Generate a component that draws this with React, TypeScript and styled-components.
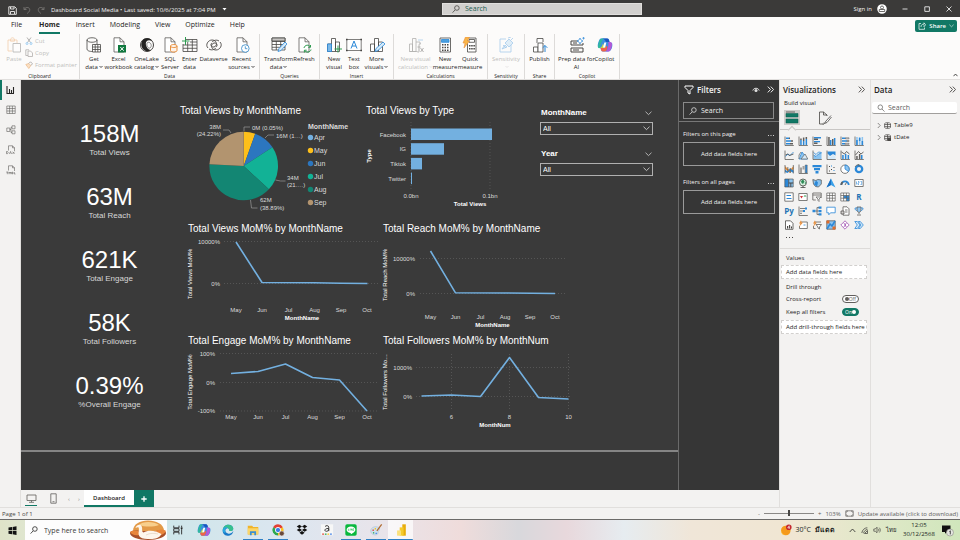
import React, { useState } from "react";
import styled, { createGlobalStyle } from "styled-components";

const teal = "#117865";
const grey = "#605e5c";
const blue = "#2b88d8";
const sky = "#8cc4f0";

const Global = createGlobalStyle`
  * { box-sizing: border-box; }
  body { margin: 0; background: #f3f2f1; color: #252423; font: 6px/8px "Open Sans", "Noto Sans", sans-serif; }
  button, input, select { font: inherit; color: inherit; margin: 0; padding: 0; border: 0; background: none; }
  h1, h2, h3, p, ul, dl, dd { margin: 0; padding: 0; font: inherit; }
  ul { list-style: none; }
  svg { display: block; flex: none; }
`;

/* ---------- frame ---------- */
const Shell = styled.div`
  display: flex;
  flex-direction: column;
  min-height: 100vh;
`;
const TitleBar = styled.header`
  display: grid;
  grid-template-columns: 442fr 200px 318fr;
  align-items: center;
  height: 17px;
  background: #3b3a39;
  color: #f3f2f1;
`;
const TitleSide = styled.div<{ $end?: boolean }>`
  display: flex;
  align-items: center;
  justify-content: ${(p) => (p.$end ? "flex-end" : "flex-start")};
  gap: ${(p) => (p.$end ? 14 : 6)}px;
  padding: ${(p) => (p.$end ? "0 7px 0 0" : "3px 0 0 8px")};
  white-space: nowrap;
`;
const Account = styled.button`
  display: flex;
  align-items: center;
  gap: 5px;
`;
const TitleSearch = styled.label`
  display: flex;
  align-items: center;
  gap: 5px;
  height: 12px;
  padding-left: 9px;
  background: #d2d0ce;
  color: #245f52;
  border: 1px solid #e1dfdd;
`;
const Field = styled.input`
  flex: 1;
  min-width: 0;
  height: 10px;
  font-size: 7px;
  outline: 0;
  &::placeholder { color: inherit; opacity: 1; }
`;
const MenuBar = styled.nav`
  display: flex;
  align-items: center;
  height: 17px;
  padding: 0 3px 0 11px;
  gap: 15px;
  background: #fcfbfa;
  font-size: 7px;
`;
const MenuTab = styled.button<{ $active?: boolean }>`
  height: 16px;
  margin: ${(p) => (p.$active ? "0 1px 0 2px" : "0")};
  border-bottom: 2px solid ${(p) => (p.$active ? teal : "transparent")};
  font-weight: ${(p) => (p.$active ? 700 : 400)};
`;
const ShareButton = styled.button`
  display: flex;
  align-items: center;
  gap: 3px;
  margin-left: auto;
  height: 12px;
  padding: 0 3px;
  border-radius: 2px;
  background: ${teal};
  color: #fff;
  font-size: 6px;
  font-weight: 600;
`;

/* ---------- ribbon ---------- */
const RibbonBar = styled.div`
  display: flex;
  height: 46px;
  background: #fcfbfa;
  border-bottom: 1px solid #e1dfdd;
`;
const Group = styled.section`
  display: flex;
  flex-direction: column;
  justify-content: space-between;
  padding: 3px 4px 0;
  border-right: 1px solid #dddbd9;
`;
const GroupItems = styled.div`
  display: flex;
`;
const GroupName = styled.h2`
  text-align: center;
  font-size: 5px;
  line-height: 6px;
  white-space: nowrap;
`;
const Tool = styled.button<{ $w: number; $off?: boolean }>`
  display: flex;
  flex-direction: column;
  align-items: center;
  gap: 2px;
  width: ${(p) => p.$w}px;
  white-space: nowrap;
  color: ${(p) => (p.$off ? "#c0bebc" : "#252423")};
  svg { opacity: ${(p) => (p.$off ? 0.4 : 1)}; }
`;
const ToolText = styled.span`
  display: block;
  text-align: center;
`;
const ClipList = styled.div`
  display: flex;
  flex-direction: column;
  gap: 4px;
  width: 51px;
  padding-left: 1px;
`;
const ClipItem = styled.button`
  display: flex;
  align-items: center;
  gap: 2px;
  height: 8px;
  color: #c0bebc;
  white-space: nowrap;
`;
const Collapse = styled.button`
  margin-left: auto;
  align-self: flex-end;
  padding: 2px;
`;

/* ---------- body ---------- */
const Body = styled.main`
  display: flex;
  flex: 1;
`;
const Rail = styled.nav`
  width: 21px;
  border-right: 1px solid #e1dfdd;
`;
const RailButton = styled.button<{ $active?: boolean }>`
  display: grid;
  place-items: center;
  width: 20px;
  height: 20px;
  border-left: 2px solid ${(p) => (p.$active ? teal : "transparent")};
`;
const Center = styled.div`
  display: flex;
  flex-direction: column;
  flex: 1;
  min-width: 0;
`;
const Work = styled.div`
  display: flex;
  flex: 1;
`;
const Canvas = styled.div`
  flex: 1;
  background: #383838;
  color: #fff;
  font-family: "Liberation Sans", Arial, sans-serif;
`;
const Page = styled.div`
  display: grid;
  grid-template-columns: 159fr 498fr;
  height: 372px;
  background: #3a3a3a;
  border-bottom: 2px solid #858585;
`;
const Kpis = styled.dl`
  display: flex;
  flex-direction: column;
  gap: 26px;
  padding: 42px 0 0 18px;
`;
const Kpi = styled.div`
  display: flex;
  flex-direction: column-reverse;
  gap: 1px;
  text-align: center;
`;
const KpiName = styled.dt`
  font-size: 8px;
  line-height: 12px;
  color: #d8d8d8;
`;
const KpiValue = styled.dd`
  font-size: 24px;
  line-height: 24px;
`;
const TopRow = styled.div`
  display: grid;
  grid-template-columns: 182fr 178fr 113fr 25fr;
  padding-top: 25px;
`;
const TrendGrid = styled.div`
  display: grid;
  grid-template-columns: 198fr 198fr 100fr;
  row-gap: 3px;
  padding-left: 2px;
`;
const Visual = styled.section<{ $col?: number; $indent: number }>`
  grid-column: ${(p) => p.$col ?? "auto"};
  h2 {
    padding-left: ${(p) => p.$indent}px;
    font-size: 10px;
    line-height: 12px;
    white-space: nowrap;
  }
`;
const Chart = styled.svg`
  width: 100%;
  margin-top: 1px;
  font-size: 6px;
  fill: #dadada;
  overflow: visible;
`;
const Slicers = styled.div`
  display: flex;
  flex-direction: column;
  gap: 13px;
  padding-top: 2px;
`;
const Slicer = styled.label`
  display: grid;
  gap: 3px;
  font-size: 8px;
  line-height: 12px;
  font-weight: 700;
`;
const SlicerHead = styled.span`
  display: flex;
  align-items: center;
  justify-content: space-between;
  padding: 0 1px 0 1px;
`;
const SlicerBox = styled.span`
  display: flex;
  align-items: center;
  height: 13px;
  padding: 0 2px;
  border: 1px solid #b0b0b0;
`;
const SlicerSelect = styled.select`
  appearance: none;
  flex: 1;
  font-size: 7px;
  font-weight: 400;
`;

/* ---------- filters ---------- */
const Filters = styled.aside`
  width: 101px;
  background: #363636;
  color: #f3f2f1;
  border-left: 1px solid #6a6a6a;
`;
const PanelHead = styled.div<{ $pad: string }>`
  display: flex;
  align-items: center;
  gap: 3px;
  height: 19px;
  padding: ${(p) => p.$pad};
  h2 {
    flex: 1;
    font-size: 8px;
    font-weight: 600;
  }
`;
const IconButton = styled.button`
  display: grid;
  place-items: center;
`;
const FilterSearch = styled.div`
  padding: 3px 5px 2px 4px;
  border-bottom: 1px solid #777;
  label {
    display: flex;
    align-items: center;
    gap: 4px;
    height: 17px;
    padding-left: 5px;
    border: 1px solid #8a8a8a;
    font-size: 7px;
  }
`;
const FilterSection = styled.section`
  padding: 8px 4px 0 4px;
  & + & { padding-top: 12px; }
`;
const FilterTitle = styled.h3`
  display: flex;
  justify-content: space-between;
  line-height: 9px;
`;
const FilterDrop = styled.div`
  display: grid;
  place-items: center;
  height: 24px;
  margin-top: 3px;
  border: 1px solid #9a9a9a;
`;

/* ---------- right panes ---------- */
const Pane = styled.aside<{ $w: number }>`
  width: ${(p) => p.$w}px;
  background: #f3f2f1;
  border-left: 1px solid #e1dfdd;
`;
const BuildLabel = styled.h3`
  padding-left: 4px;
  line-height: 8px;
`;
const BuildTabs = styled.div`
  display: flex;
  gap: 17px;
  height: 23px;
  padding: 3px 4px 0;
  border-bottom: 1px solid #c8c6c4;
`;
const BuildTab = styled.button<{ $active?: boolean }>`
  position: relative;
  display: grid;
  place-items: center;
  width: 16px;
  height: 15px;
  background: ${(p) => (p.$active ? "#cfcdcb" : "none")};
  &::after {
    content: ${(p) => (p.$active ? '""' : "none")};
    position: absolute;
    left: 5px;
    top: 17px;
    width: 5px;
    height: 5px;
    border: 1px solid #c8c6c4;
    border-width: 1px 0 0 1px;
    background: #f3f2f1;
    transform: rotate(45deg);
  }
`;
const Gallery = styled.div`
  display: grid;
  grid-template-columns: repeat(6, 14px);
  padding: 4px 0 0 2px;
`;
const GalleryButton = styled.button`
  display: grid;
  place-items: center;
  height: 14px;
`;
const More = styled.button`
  display: block;
  height: 8px;
  margin-left: 5px;
`;
const Wells = styled.div`
  display: flex;
  flex-direction: column;
  margin-top: 8px;
  padding: 4px 3px 0 1px;
  border-top: 1px solid #dddbd9;
`;
const WellTitle = styled.h3`
  padding-left: 5px;
  line-height: 10px;
`;
const Well = styled.div`
  display: flex;
  align-items: center;
  height: 14px;
  margin: 2px 0 3px;
  padding-left: 4px;
  border: 1px dashed #d2d0ce;
  background: #fff;
  white-space: nowrap;
`;
const SwitchRow = styled.label`
  display: flex;
  align-items: center;
  justify-content: space-between;
  height: 13px;
  padding: 0 8px 0 5px;
`;
const SwitchBody = styled.span<{ $on: boolean }>`
  position: relative;
  display: flex;
  flex-direction: ${(p) => (p.$on ? "row" : "row-reverse")};
  align-items: center;
  justify-content: space-between;
  width: 17px;
  height: 8px;
  padding: 0 2px;
  border: 1px solid ${(p) => (p.$on ? teal : grey)};
  border-radius: 4px;
  background: ${(p) => (p.$on ? teal : "#fff")};
  color: ${(p) => (p.$on ? "#fff" : grey)};
  font-size: 5px;
  line-height: 6px;
  &::after {
    content: "";
    width: 4px;
    height: 4px;
    border-radius: 2px;
    background: currentColor;
  }
  input { position: absolute; inset: 0; opacity: 0; }
`;
const DataSearch = styled.label`
  display: flex;
  align-items: center;
  gap: 3px;
  height: 12px;
  margin: 3px 3px 5px 1px;
  padding-left: 5px;
  border-bottom: 1px solid #a19f9d;
  border-radius: 2px;
  background: #fff;
  color: ${grey};
`;
const TableItem = styled.button`
  display: flex;
  align-items: center;
  gap: 3px;
  height: 12px;
  padding-left: 6px;
`;

/* ---------- bottom ---------- */
const PageTabs = styled.nav`
  display: flex;
  align-items: center;
  height: 17px;
  background: #f3f2f1;
`;
const ViewButton = styled.button<{ $active?: boolean }>`
  display: grid;
  place-items: center;
  width: 12px;
  height: 15px;
  margin-left: ${(p) => (p.$active ? 4 : 10)}px;
  border-bottom: 1px solid ${(p) => (p.$active ? teal : "transparent")};
`;
const PageArrow = styled.button`
  width: 10px;
  color: #8a8886;
`;
const PageTab = styled.button`
  width: 50px;
  height: 17px;
  border-bottom: 2px solid ${teal};
  background: #fff;
  font-weight: 600;
`;
const AddPage = styled.button`
  display: grid;
  place-items: center;
  width: 20px;
  height: 17px;
  background: ${teal};
`;
const ArrowPair = styled.div`
  display: flex;
  margin: 0 0 0 5px;
`;
const Status = styled.footer`
  display: flex;
  align-items: center;
  justify-content: space-between;
  height: 13px;
  padding: 0 2px;
  border-top: 1px solid #e1dfdd;
  border-bottom: 1px solid #6b6a68;
  color: #484644;
`;
const StatusEnd = styled.div`
  display: flex;
  align-items: center;
  gap: 4px;
  color: ${grey};
`;
const ZoomRange = styled.input`
  appearance: none;
  width: 50px;
  height: 8px;
  &::-webkit-slider-runnable-track { height: 1px; background: #8a8886; }
  &::-webkit-slider-thumb { appearance: none; width: 2px; height: 6px; margin-top: -3px; background: #484644; }
`;
const Taskbar = styled.footer`
  display: flex;
  align-items: center;
  height: 20px;
  background: linear-gradient(90deg, #dfe3c8 0, #dfe6d0 3%, #cfe6ea 18%, #dce6f0 30%, #e9e4ea 40%, #efdcdb 48%, #d8d8dc 54%, #e8d8dc 59%, #e6ecf0 65%, #f0e6d8 72%, #f0e6d2 83%, #e0e8c8 91%, #d0e6bc 100%);
`;
const Start = styled.button`
  display: grid;
  place-items: center;
  width: 25px;
  height: 20px;
`;
const TaskSearch = styled.label`
  display: flex;
  align-items: center;
  gap: 6px;
  width: 142px;
  height: 20px;
  padding-left: 5px;
  background: #fdfdfd;
  color: #3b3a39;
`;
const TaskApps = styled.div`
  display: flex;
  width: 246px;
  height: 20px;
`;
const TaskApp = styled.button<{ $state?: "run" | "active" }>`
  display: grid;
  place-items: center;
  flex: 1;
  background-color: ${(p) => (p.$state === "active" ? "rgba(255,255,255,.7)" : "transparent")};
  background-image: ${(p) => (p.$state ? "linear-gradient(#2f80c4, #2f80c4)" : "none")};
  background-size: ${(p) => (p.$state === "active" ? "100%" : "20px")} 1px;
  background-position: center bottom;
  background-repeat: no-repeat;
`;
const Tray = styled.div`
  display: flex;
  align-items: center;
  gap: 5px;
  margin-left: auto;
  padding-right: 6px;
  color: #201f1e;
`;
const Weather = styled.button`
  display: flex;
  align-items: center;
  gap: 4px;
  margin-right: 9px;
  font-size: 7px;
`;
const WeatherText = styled.span`
  font-weight: 700;
`;
const Clock = styled.time`
  width: 34px;
  display: grid;
  justify-items: center;
  line-height: 9px;
`;

/* ---------- icons ---------- */
type Mark = [string, string?, string?, number?]; // path, fill, stroke, stroke width

function Icon({ marks, w, h = w, box }: { marks: Mark[]; w: number; h?: number; box?: string }) {
  return (
    <svg width={w} height={h} viewBox={box ?? `0 0 ${w} ${h}`} fill="none" aria-hidden="true">
      {marks.map(([d, fill, stroke, sw], i) => (
        <path key={i} d={d} fill={fill || "none"} stroke={stroke || "none"} strokeWidth={sw ?? 0.8} />
      ))}
    </svg>
  );
}

const magnifier = (c: string): Mark[] => [["M3 5L.6 7.6M2.6 3a2.3 2.3 0 1 0 4.6 0a2.3 2.3 0 1 0-4.6 0z", "", c]];
const glass: Mark[] = [["M5 5L7.5 7.6M1 3.2a2.3 2.3 0 1 0 4.6 0a2.3 2.3 0 1 0-4.6 0z", "", grey, 0.7]];
const chevron = (c: string): Mark[] => [["M.5 .7L3.5 3.6L6.5 .7", "", c, 0.8]];
const doubleChevron = (c: string): Mark[] => [["M.8 .6L3.5 3.5L.8 6.4M3.8 .6L6.5 3.5L3.8 6.4", "", c, 0.9]];

const dk = "#484644";
const orange = "#e88f3c";
const page = "M3 .8h6l4 4V15H3zM9 .8v4h4";
const table = "M1 1h13v12H1zM1 4.5h13M1 7.5h13M1 10.3h13M5.3 1v12M9.7 1v12";
const columns = "M1.5 7h4v7.5h-4zM5.5 1.5h4v13h-4zM9.5 5h4v9.5h-4z";

const ribbonIcons: Record<string, Mark[]> = {
  paste: [["M2 3h9v3M2 3v11h4M4.5 3c0-3 4-3 4 0v1.2h-4z", "", orange], ["M7 6.5h7.5V15H7z", "#fff", dk]],
  get: [["M1 3v9c0 3 7 2.5 7 2.5M1 3c0-3 10-3 10 0s-10 3-10 0M11 3v4", "", dk], ["M6.5 7.5h8v7.5h-8z", "#fff", dk], ["M6.5 10h8M6.5 12.5h8M9.2 7.5v7.5M11.8 7.5v7.5", "", dk]],
  excel: [[page, "#fff", grey], ["M7 8h8v7.5H7z", "#10793f"], ["M9.3 10l3.4 3.7M12.7 10l-3.4 3.7", "", "#fff", 1]],
  onelake: [["M1.5 8a6.5 6.5 0 1 0 13 0a6.5 6.5 0 1 0-13 0z", "", dk, 1], ["M3 4c3-4 9-3 10 0-4-2-7 0-6 4 .5 3 3 5 5 5-5 4-12-2-9-9z", "#252423"], ["M8.5 5.5c2.5-1 5 2.5 3 5s-5-3-3-5z", "#fff", dk, 0.6]],
  sql: [[page, "#fff", grey], ["M8.5 9v4.5c0 2 6.5 2 6.5 0V9c0-2-6.5-2-6.5 0c0 2 6.5 2 6.5 0", "#fdf3ea", orange, 1]],
  enter: [["M3 2.5h12V14.5H1V7M1 8h14M1 11.3h14M5.7 5v9.5M10.3 2.5v12M8 5h7", "", dk], ["M3.5 0v8M0 4h7.5", "", "#2e9b50", 1]],
  dataverse: [["M2 11c-3-3 0-8 4-8 5 0 6 6 2 7-3 .5-4-3-2-4M14 5c3 3 0 8-4 8-5 0-6-6-2-7 3-.5 4 3 2 4M3 12c3 2 6 0 7-1M13 4c-3-2-6 0-7 1", "", dk, 0.9]],
  recent: [[page, "#fff", grey], ["M7.5 11.5a3.8 3.8 0 1 0 7.6 0a3.8 3.8 0 1 0-7.6 0z", "#fff", "#2f87c8"], ["M11.3 9.3v2.4h2", "", "#2f87c8"]],
  transform: [[table, "#fff", dk], ["M1 1h13v3H1z", "#c8c6c4", dk], ["M7 14.5l1-3 6-6.5 2 2-6 6.5z", "#d6ebfa", blue]],
  refresh: [[page, "#fff", grey], ["M8 11c.5-3 5-4 6.3-1M14.5 8v2.3h-2.3M15 12.5c-.5 3-5 3.500-6.300 1M8.400 15.500v-2.300h2.300", "", "#2e9b50", 1]],
  visual: [[columns, "#fff", dk], ["M1.5 7h4v7.5h-4z", "#7cb9e8", blue], ["M12 8.5v7M8.5 12h7.5", "", "#2e9b50", 1]],
  text: [["M.8 2.5h14.4v11H.8z", "#fff", grey], ["M5 11.5L8 4l3 7.5M6 9h4", "", blue, 1], ["M0 1.7h1.6v1.6H0zM14.4 1.7H16v1.6h-1.6zM0 12.7h1.6v1.6H0zM14.4 12.7H16v1.6h-1.6z", dk]],
  more: [[columns, "#fff", dk], ["M6 14.5l1-3 7-6.5 2 2-7 6.5z", "#d6ebfa", blue]],
  calc: [["M1.5 7h3v7.5h-3zM4.5 1.5h3.5v13H4.5zM8 5h4v2M1.5 14.5h8", "", dk], ["M10 3h5", "", blue], ["M13 7c-2-1-2 1-2 3v4c0 1-.5 1.5-1.5 1M9.5 10h3M12.5 11l3 4M15.5 11l-3 4", "", dk, 1]],
  measure: [["M3 1h10.5v14H3z", "#fff", dk], ["M4.5 2.5h7.5v2.8H4.5z", "#4aa0e0", blue], ["M5 7h1.5v1.5H5zM7.5 7H9v1.5H7.5zM10 7h1.5v1.5H10zM5 9.7h1.5v1.5H5zM7.5 9.7H9v1.5H7.5zM10 9.7h1.5v1.5H10zM5 12.4h1.5v1.5H5zM7.5 12.4H9v1.5H7.5zM10 12.4h1.5v1.5H10z", dk]],
  quick: [["M5.5 1h8.5v14H5.5z", "#fff", dk], ["M7 2.5h5.5v2.8H7z", "#fff", dk], ["M7 8h1.5v1.5H7zM9.2 8h1.5v1.5H9.2zM11.4 8h1.5v1.5h-1.5zM7 11h1.5v1.5H7zM9.2 11h1.5v1.5H9.2zM11.4 11h1.5v1.5h-1.5z", dk], ["M3.5 0h4L5.5 4h2L2 11l1-5H1z", "#f9b548", orange, 0.6]],
  sensitivity: [["M2 2h6M13 8v7H2V2", "", blue], ["M7 6l4-4 4 4-4 4zM10 1l3-1M13 3l2-2M5 8l3 3M4 12l3-4 2 2z", "#b5daf5", blue]],
  publish: [["M1.5 10h4.5v5H1.5zM5 6V1.5h6V5", "#fff", dk], ["M6 6h5v9H6z", "#fff", dk], ["M13 15V8.5M10.7 10.8L13 8.5l2.3 2.3", "", blue, 1]],
  prep: [["M2 4h8M2 4v4h12V6M2 11h12v4H2zM4 6h4M4 13h6", "", dk, 1], ["M11 1l1 2 2 1-2 1-1 2-1-2-2-1 2-1zM14.5 0v2.5M13.3 1.2h2.5", "#fff", blue, 0.7]],
};
const copilot: Mark[] = [
  ["M5 1.500h5c2 0 2 1.500 2.500 3.500L15 6c1 2 0 8.500-4 8.500H6c-2 0-2-2-2.500-3.500C0 11 .5 8 1.500 5S3 1.500 5 1.500z", "#3b8fe0"],
  ["M1 9c1-4 1.500-7.500 4-7.500h2c-2 1.500-2.500 4-3.500 7C3 10.500 3 11 3.500 11 1 11.500.7 10.500 1 9z", "#2fb8a0"],
  ["M1.500 10.500C2.500 11.500 4 11 5 9l1-2.500L8 11H3.500c-1 0-1.700 0-2-.5z", "#c8d84a"],
  ["M5 1.500h5c2 0 2 1.500 2.500 3.500H9C8 3 7 1.500 5 1.500z", "#1b55c0"],
  ["M11 5h2c2 0 2.500 2 1.500 5.500s-2 4-3.500 4H8.500c2-1 2-3 2.700-6 .3-1.500.5-2.500-.2-3.500z", "#b458d8"],
  ["M3.500 11H7c1 0 2-1 2.500-2.500L10.500 10c-.5 2.500-1 4.500-3 4.500H6c-2 0-2-2-2.500-3.500z", "#f0624a"],
  ["M7.300 5.500h2L8.200 10.500H6z", "#fff"],
];

const ax = "M1 .5V9.5H9.8";
const frame = "M.8 1.5h8.4v7H.8z";
const viz: [string, Mark[]][] = [
  ["Stacked bar chart", [[ax, "", grey], ["M2 1.5h3v1.6H2zM2 4.2h5v1.6H2zM2 7h4v1.6H2z", blue], ["M5 1.5h1v1.6H5zM7 4.2h2v1.6H7zM6 7h3v1.6H6z", grey]]],
  ["Stacked column chart", [[ax, "", grey], ["M2.2 4h1.5v5H2.2zM4.9 5h1.5v4H4.9zM7.6 3h1.5v6H7.6z", blue], ["M2.2 2.5h1.5V4H2.2zM4.9 1.5h1.5V5H4.9zM7.6 1h1.5v2H7.6z", grey]]],
  ["Clustered bar chart", [[ax, "", grey], ["M2 1h7v1.5H2zM2 5h6v1.3H2z", blue], ["M2 2.6h4v1.4H2zM2 6.5h3.5v1.5H2z", grey]]],
  ["Clustered column chart", [[ax, "", grey], ["M2.2 1h1.5v8H2.2zM6 3h1.5v6H6z", grey], ["M3.9 4h1.5v5H3.9zM7.9 2h1.5v7H7.9z", blue]]],
  ["100% stacked bar chart", [[ax, "", grey], ["M2 1.5h3.5v1.6H2zM2 4.2h5v1.6H2zM2 7h3v1.6H2z", blue], ["M5.5 1.8h3.5v1H5.5zM7 4.5h2v1H7zM5 7.3h4v1H5z", "", grey, 0.6]]],
  ["100% stacked column chart", [[ax, "", grey], ["M2.2 1h1.5v8H2.2zM4.9 1h1.5v8H4.9zM7.6 1h1.5v8H7.6z", sky], ["M2.2 4h1.5v5H2.2zM4.9 2h1.5v3H4.9zM7.6 5h1.5v4H7.6z", blue]]],
  ["Line chart", [[ax, "", grey], ["M1.5 6.5L4 4l2 1.5L9.5 2", "", blue], ["M1.5 5l2-1 2 1.5L9.5 4", "", dk]]],
  ["Area chart", [["M1 9l3-7 5.5 7z", sky, blue], ["M1 9V5l2-3M3 9l4-5 2.5 4.5V9z", "#d6ebfa", grey, 0.7]]],
  ["Stacked area chart", [["M1.5 9V5l2.5 1.5L6.5 4l3-1v6z", sky], ["M1.5 5l2.5 1.5L6.5 4l3-1M1.5 2.5l2.5 2L6.5 2l3 .5", "", blue], [ax, "", grey]]],
  ["100% area chart", [["M1.5 1.5h8v4L7 4 4 6 1.5 3.5z", blue], ["M1.5 4.5L4 7l3-2 2.5 1.5V9h-8z", "#d6ebfa"], [ax, "", grey]]],
  ["Line and stacked column", [[ax, "", grey], ["M2.2 5h1.5v4H2.2zM4.9 4h1.5v5H4.9zM7.6 5h1.5v4H7.6z", blue], ["M1.5 2l3 2 2-2.5L9.5 4", "", dk]]],
  ["Line and clustered column", [[ax, "", grey], ["M2.2 6h1.5v3H2.2zM4.9 4h1.5v5H4.9z", grey], ["M7 5h1.5v4H7z", blue], ["M1.5 5l3-3.5L7 4l2.5-2", "", dk]]],
  ["Ribbon chart", [["M1 2l2.5 2.5L6 6l3.5-4v3L6 9 3.5 7 1 5z", orange], ["M1 5.5l2.5 2 2.5-3 3.5 2V9L6 7 3.5 9 1 8z", blue], ["M1 1v8.5M3.8 3v5M6.3 4v5M9.3 1v8.5", "", grey]]],
  ["Waterfall chart", [[ax, "", grey], ["M2 3.5h2V9H2zM4.5 2h2v3.5h-2z", "#a19f9d"], ["M7.2 1h2v8h-2z", blue, grey, 0.5]]],
  ["Funnel", [["M.5 1h9v2.3h-9zM2 4h6v2.3H2zM3.5 7h3v2.5h-3z", blue]]],
  ["Scatter chart", [[ax, "", grey], ["M3 2h1v1H3zM5 5h1v1H5zM7.5 3h1v1h-1zM3 6.5h1v1H3z", dk], ["M5 1.5h1v1H5zM7.5 6h1v1h-1z", blue]]],
  ["Pie chart", [["M.8 5.2a4.2 4.2 0 1 0 8.4 0a4.2 4.2 0 1 0-8.4 0z", "#fff", grey], ["M5 5V1a4.2 4.2 0 0 1 3.5 6.5z", sky, blue]]],
  ["Donut chart", [["M1.8 5a3.2 3.2 0 1 0 6.4 0a3.2 3.2 0 1 0-6.4 0z", "", blue, 2.3], ["M1 3a4.5 4.5 0 0 1 4-2.5v2", "", grey]]],
  ["Treemap", [["M.8 1h4v8h-4z", blue, dk, 0.6], ["M4.8 1h4.4v4H4.8zM4.8 5h2v4h-2zM6.8 5h2.4v4H6.8z", sky, dk, 0.6]]],
  ["Map", [["M1.5 4.5a3.5 3.5 0 1 0 7 0a3.5 3.5 0 1 0-7 0z", "#d8f0df", dk], ["M3 3l2-1.5 1.5 2L5 6 3.5 5zM6.5 5l1.5-1v2z", "#2e8b57"], ["M2.5 9.5h5M5 8v1.5", "", dk]]],
  ["Filled map", [["M.8 1.5l3 1 2-1 3.5.5v4L6.5 9l-3-.5-2-2.5z", sky, grey], ["M4 2.5l2 2-1 4-3-2z", blue]]],
  ["Azure map", [["M5 .5L9.5 9.5 5 7 .5 9.5z", "#3aa0e8"], ["M5 .5V7L.5 9.5z", "#1b6fc0"]]],
  ["Gauge", [["M1.3 7a3.7 3.7 0 0 1 7.4 0", "", blue, 1.8], ["M1.3 7a3.7 3.7 0 0 1 1.4-3", "", grey, 1.8], ["M5 7l1.5-2.5", "", dk]]],
  ["Card", [[frame, "#fff", grey], ["M2.5 3.5v3M4 3.5h1v1.5h-1v1.5h1M6.5 3.5h1.2v3H6.5", "", blue, 0.6]]],
  ["Multi-row card", [["M.8 .8h8.4v8.4H.8z", "#fff", grey], ["M2.5 3.5h4.5M2.5 6.5h5", "", blue, 1]]],
  ["KPI", [[frame, "#fff", grey], ["M2 4h3L3.5 6.5z", "#d13438"], ["M5.5 4.5L7 3l1.5 1.5z", "#2e9b50"]]],
  ["Slicer", [["M.8 1h8.4v5M.8 1v7h3M.8 3h8.4", "", grey], ["M4 5h5L7 7v2.5L6 8.5V7z", "#fff", grey, 0.7]]],
  ["Table", [["M.8 1h8.4v8H.8zM.8 3.5h8.4M.8 6.2h8.4M3.6 1v8M6.4 1v8", "#fff", grey, 0.7]]],
  ["Matrix", [["M.8 1h8.4v8H.8z", "#fff"], ["M3.6 3.5h5.6V9H6.4V6.2H3.6z", blue], ["M.8 1h8.4v8H.8zM.8 3.5h8.4M.8 6.2h8.4M3.6 1v8M6.4 1v8", "", grey, 0.7]]],
  ["R script visual", []],
  ["Python visual", []],
  ["Key influencers", [[ax, "", grey], ["M2 2.5h5M2 5h3M2 7.3h2", "", grey], ["M7 1.5h2v2H7zM5 4h2v2H5z", blue]]],
  ["Decomposition tree", [["M.5 3.8h3v2.5h-3zM6.5 .5h3v2.3h-3zM6.5 3.9h3v2.3h-3zM6.5 7.2h3v2.3h-3z", blue], ["M3.5 5h3M5 1.5v7M5 1.6h2M5 8.4h2", "", grey]]],
  ["Q&A", [["M.8 1.2h8.4v5.6H4.5L2.8 8.8V6.8h-2z", "#fff", blue]]],
  ["Smart narrative", [["M3 .8h4l2 2v6.4H3z", "#fff", grey], ["M1 5h3v3H1zM5 4h2.5M5 6h2.5", "#d2d0ce", dk, 0.7]]],
  ["Goals", [["M3 1h4v3c0 3-4 3-4 0zM5 6.3V8M3 9h4", sky, grey], ["M3 2H1c0 2 1 2.5 2 2.5M7 2h2c0 2-1 2.5-2 2.5", "", blue]]],
  ["Paginated report", [["M1.5 .8h5l2.5 2.5v6H1.5z", "#fff", dk], ["M3 6h1.2v2.5H3zM5 5h1.2v3.5H5zM7 6.5h1v2H7z", dk]]],
  ["Card (new)", [["M3 2h6.3v6.5H1.5V6", "#fff", grey], ["M3 .3L1 3.5h1.5L1 7l4-4.5H3.5z", orange], ["M5.5 5h2", "", blue]]],
  ["Slicer (new)", [["M3 2h6M1.5 6v2.5h2", "", grey], ["M3 .3L1 3.5h1.5L1 7l4-4.5H3.5z", orange], ["M4 4.5h5.5L7.5 7v2L6 8V7z", "#fff", grey]]],
  ["ArcGIS map", [["M.8 .8h8.4v8.4H.8z", sky, grey], ["M1 9l3-5 2 2 3-5", "", blue, 1.5], ["M.5 .5h3v3h-3zM6.5 6.5h3v3h-3z", "#e06c2a"]]],
  ["Power Apps", [["M5 .8L9.2 5 5 9.2.8 5z", "#fff", "#a04fb0"], ["M3.5 3L6 5 3.5 7M6.5 3L4.5 5 6.5 7", "", "#a04fb0"]]],
  ["Power Automate", [["M.8 1.5h2.5L6 5 3.3 8.5H.8L3.3 5zM4.3 1.5h2L9.3 5 6.3 8.5h-2L7 5z", "#d6ebfa", blue]]],
];

const railIcons: [string, Mark[]][] = [
  ["Report view", [["M1 1v7.5h7M3.5 8V4M5.5 8V5M7.5 8V2", "", "#252423", 1.1]]],
  ["Table view", [["M.8 1h8.4v7.5H.8zM.8 3.5h8.4M.8 6h8.4M3.6 1v7.5M6.4 1v7.5", "", grey, 0.6]]],
  ["Model view", [["M.8 3h3v3.5h-3zM6 .8h3v3H6zM6 5.8h3v3H6zM3.8 4.5h1.2V2.3h1M5 4.5v3h1", "", grey, 0.6]]],
  ["DAX query view", [["M2.5 5.5V.8h4l2 2v3.2M6.5 .8v2h2M.5 6.5v2.2h1l.7-1-.7-1.2zM3.5 9l1-2.5 1 2.5M6.5 6.7l2 2.2M8.5 6.7l-2 2.2", "", grey, 0.6]]],
  ["TMDL view", [["M2.5 5.5V.8h4l2 2v3.2M6.5 .8v2h2M.3 7h2M1.3 7v2.2M3 9.2V7l1 1.3L5 7v2.2M6 7v2c1.5 0 1.5-2 0-2M8.3 7v2h1.2", "", grey, 0.6]]],
];

/* ---------- charts ---------- */
const views = "#73b0e0";
const grid = { stroke: "#5c5c5c", strokeWidth: 0.8, strokeDasharray: "1 2" };

const slices: [string, number, number, string][] = [
  ["May", 0, 19.6, "#fdbf1b"],
  ["Jun", 19.6, 57, "#2c76bf"],
  ["Jul", 57, 132.8, "#12b296"],
  ["Aug", 132.8, 272.8, "#138673"],
  ["Sep", 272.8, 360, "#b2946f"],
];
const legend: [string, string][] = [["Apr", views], ...slices.map((s): [string, string] => [s[0], s[3]])];

function PieChart() {
  const cx = 63.7, cy = 48, r = 34.3;
  const at = (a: number) => {
    const t = (a * Math.PI) / 180;
    return `${cx + r * Math.sin(t)} ${cy - r * Math.cos(t)}`;
  };
  return (
    <Chart viewBox="0 0 182 105">
      {slices.map(([name, from, to, color]) => (
        <path key={name} fill={color} d={`M${cx} ${cy}L${at(from)}A${r} ${r} 0 ${to - from > 180 ? 1 : 0} 1 ${at(to)}Z`} />
      ))}
      <path fill="none" stroke="#999" strokeWidth=".7" d="M43 12h6l2 3M64 13V9h6M85 20l3-3h6M95.5 62l5 1h5M70.5 82l1 8h6" />
      <g textAnchor="end"><text x="41" y="11">38M</text><text x="41" y="18">(24.22%)</text></g>
      <text x="72" y="12">0M (0.05%)</text>
      <text x="96" y="20">16M (1…)</text>
      <text x="107" y="62">34M</text><text x="107" y="69">(21.…)</text>
      <text x="80" y="84">62M</text><text x="80" y="92">(38.89%)</text>
      <g fontSize="7">
        <text x="128" y="11" fontWeight="700">MonthName</text>
        {legend.map(([name, color], i) => (
          <g key={name}>
            <circle cx="130.500" cy={19.5 + i * 13} r="2.700" fill={color} />
            <text x="134" y={22 + i * 13}>{name}</text>
          </g>
        ))}
      </g>
    </Chart>
  );
}

function BarChart() {
  const bars: [string, number][] = [["Facebook", 81], ["IG", 33], ["Tiktok", 11], ["Twitter", 1]];
  return (
    <Chart viewBox="0 0 178 105">
      <path d="M49 4V71M128 4V71" {...grid} />
      {bars.map(([name, value], i) => (
        <g key={name}>
          <rect x="49" y={10.5 + i * 14.7} width={value} height="11.500" fill={views} />
          <text x="44" y={18.5 + i * 14.7} textAnchor="end">{name}</text>
        </g>
      ))}
      <g textAnchor="middle">
        <text x="49" y="80">0.0bn</text>
        <text x="128" y="80">0.1bn</text>
        <text x="108" y="88" fontWeight="700" fill="#fff">Total Views</text>
        <text transform="translate(9 38) rotate(-90)" fontWeight="700" fill="#fff">Type</text>
      </g>
    </Chart>
  );
}

type Tick = [number, string];
interface Trend {
  title: string;
  height: number;
  axis: string;
  axisY: number;
  gridX: [number, number];
  labelX: number;
  yTicks: Tick[];
  xTicks: Tick[];
  xLabelY: number;
  xTitle?: [number, string];
  line: string;
  vertical?: boolean;
}
const trends: Trend[] = [
  {
    title: "Total Views MoM% by MonthName", height: 96, axis: "Total Views MoM%", axisY: 38, gridX: [42, 196], labelX: 38,
    yTicks: [[5.5, "10000%"], [47.5, "0%"]],
    xTicks: [[54, "May"], [80, "Jun"], [106.5, "Jul"], [132.5, "Aug"], [159, "Sep"], [185, "Oct"]],
    xLabelY: 76, xTitle: [120, "MonthName"], line: "54,6 80,46.5 132,46.8 159,47.3 185.5,47.5",
  },
  {
    title: "Total Reach MoM% by MonthName", height: 96, axis: "Total Reach MoM%", axisY: 39, gridX: [40, 186], labelX: 35,
    yTicks: [[22.5, "10000%"], [57.5, "0%"]],
    xTicks: [[50.5, "May"], [75.5, "Jun"], [100.5, "Jul"], [125, "Aug"], [150, "Sep"], [175, "Oct"]],
    xLabelY: 83, xTitle: [112.5, "MonthName"], line: "50.5,15 75.5,56.8 125,57 175,57.5",
  },
  {
    title: "Total Engage MoM% by MonthName", height: 84, axis: "Total Engage MoM%", axisY: 34, gridX: [38, 196], labelX: 33,
    yTicks: [[5.5, "100%"], [34.5, "0%"], [63, "-100%"]],
    xTicks: [[49, "May"], [76, "Jun"], [103.5, "Jul"], [130.5, "Aug"], [157.5, "Sep"], [185, "Oct"]],
    xLabelY: 71, line: "49,25.5 76,23.5 103.5,16 130.5,29.5 157.5,32 185,63",
  },
  {
    title: "Total Followers MoM% by MonthNum", height: 84, axis: "Total Followers Mo…", axisY: 34, gridX: [36, 192], labelX: 32,
    yTicks: [[19.5, "1000%"], [48.5, "0%"]],
    xTicks: [[71.5, "6"], [129.5, "8"], [188.5, "10"]],
    xLabelY: 71, xTitle: [115, "MonthNum"], line: "41.5,48 71.5,47 100.5,48.5 129.5,9.5 158.5,49.5 188.5,51", vertical: true,
  },
];

function TrendVisual({ t, col }: { t: Trend; col: number }) {
  const axisX = col === 1 ? 10 : 7;
  return (
    <Visual $col={col} $indent={col === 1 ? 6 : 3}>
      <h2>{t.title}</h2>
      <Chart viewBox={`0 0 198 ${t.height}`}>
        {t.yTicks.map(([y, label]) => (
          <g key={label}>
            <path d={`M${t.gridX[0]} ${y}H${t.gridX[1]}`} {...grid} />
            <text x={t.labelX} y={y + 2} textAnchor="end">{label}</text>
          </g>
        ))}
        {t.vertical && t.xTicks.map(([x]) => <path key={x} d={`M${x} 6V63`} {...grid} />)}
        <g textAnchor="middle">
          {t.xTicks.map(([x, label]) => <text key={label} x={x} y={t.xLabelY}>{label}</text>)}
          {t.xTitle && <text x={t.xTitle[0]} y={t.xLabelY + 8} fontWeight="700" fill="#fff">{t.xTitle[1]}</text>}
          <text transform={`translate(${axisX} ${t.axisY}) rotate(-90)`} fill="#fff">{t.axis}</text>
        </g>
        <polyline points={t.line} fill="none" stroke={views} strokeWidth="1.600" strokeLinejoin="round" />
      </Chart>
    </Visual>
  );
}

/* ---------- ribbon ---------- */
type ToolDef = [string, string, number, boolean?, boolean?]; // icon, text, width, drop-down, disabled
const groups: [string, ToolDef[]][] = [
  ["Data", [["get", "Get\ndata", 20, true], ["excel", "Excel\nworkbook", 29], ["onelake", "OneLake\ncatalog", 27, true], ["sql", "SQL\nServer", 20], ["enter", "Enter\ndata", 19], ["dataverse", "Dataverse", 29], ["recent", "Recent\nsources", 27, true]]],
  ["Queries", [["transform", "Transform\ndata", 29, true], ["refresh", "Refresh", 22]]],
  ["Insert", [["visual", "New\nvisual", 20], ["text", "Text\nbox", 20], ["more", "More\nvisuals", 25, true]]],
  ["Calculations", [["calc", "New visual\ncalculation", 35, true, true], ["measure", "New\nmeasure", 24], ["quick", "Quick\nmeasure", 26]]],
  ["Sensitivity", [["sensitivity", "Sensitivity\n", 28, true, true]]],
  ["Share", [["publish", "Publish", 21]]],
  ["Copilot", [["prep", "Prep data for\nAI", 35], ["copilot", "Copilot", 21]]],
];

const Drop = styled.svg`
  display: inline-block;
  margin-left: 1px;
`;

function RibbonTool({ def: [icon, text, w, drop, off] }: { def: ToolDef }) {
  const lines = text.split("\n");
  return (
    <Tool $w={w} $off={off} disabled={off}>
      <Icon w={16} marks={icon === "copilot" ? copilot : ribbonIcons[icon]} />
      <span>
        {lines.map((line, i) => (
          <ToolText key={i}>
            {line}
            {drop && i === lines.length - 1 && (
              <Drop width="4" height="4" viewBox="0 0 4 4" fill="none" stroke="currentColor" strokeWidth=".8"><path d="M.5 1L2 2.5L3.5 1" /></Drop>
            )}
          </ToolText>
        ))}
      </span>
    </Tool>
  );
}

function Ribbon() {
  return (
    <RibbonBar>
      <Group>
        <GroupItems>
          <Tool $w={20} $off disabled><Icon w={16} marks={ribbonIcons.paste} /><ToolText>Paste</ToolText></Tool>
          <ClipList>
            <ClipItem disabled><Icon w={8} marks={[["M2 .5L5.5 5.5M6 .5L2.5 5.5", "", "#a19f9d"], ["M1 6.5a1 1 0 1 0 2 0a1 1 0 1 0-2 0M5 6.5a1 1 0 1 0 2 0a1 1 0 1 0-2 0", "", sky]]} />Cut</ClipItem>
            <ClipItem disabled><Icon w={8} marks={[["M3 6.5H.8V.8H4M3 2h2.5l2 2v3.5H3z", "", "#b3b0ad"]]} />Copy</ClipItem>
            <ClipItem disabled><Icon w={8} marks={[["M.8 3.5l3-1 2 2-2 3z", "#fbe0c4", "#eebf90"], ["M3.8 2.5L5.5 .8 7.5 2.8 5.8 4.5", "", "#a19f9d"]]} />Format painter</ClipItem>
          </ClipList>
        </GroupItems>
        <GroupName>Clipboard</GroupName>
      </Group>
      {groups.map(([name, tools]) => (
        <Group key={name}>
          <GroupItems>{tools.map((t) => <RibbonTool key={t[0]} def={t} />)}</GroupItems>
          <GroupName>{name}</GroupName>
        </Group>
      ))}
      <Collapse aria-label="Collapse ribbon"><Icon w={5} h={4} marks={[["M.5 3.2L2.5 1l2 2.2", "", "#252423"]]} /></Collapse>
    </RibbonBar>
  );
}

function Switch({ label, initial }: { label: string; initial: boolean }) {
  const [on, setOn] = useState(initial);
  return (
    <SwitchRow>
      {label}
      <SwitchBody $on={on}>
        <input type="checkbox" role="switch" checked={on} onChange={() => setOn(!on)} />
        {on ? "On" : "Off"}
      </SwitchBody>
    </SwitchRow>
  );
}

const ScriptGlyph = styled.span`
  color: #2474b5;
  font-size: 8px;
  font-weight: 700;
`;

/* ---------- taskbar pictures ---------- */
const bigIcons: [string, Mark[], ("run" | "active")?][] = [
  ["Task view", [["M2 3v2.5h6V3M2 13v-2.5h6V13M2 6.5h6v3H2zM11 3v2M11 7v6", "", "#252423", 1], ["M10 5h2v2h-2z", "#252423"]]],
  ["Copilot", copilot],
  ["Edge", [["M14 9c0 3-3 5.5-6.5 5.5C3.5 14.5 1.5 11 2 8c.5-4 3.5-6 6.5-6C12 2 14 4 14 6.5 14 9 11 9.5 9.5 8.8 10.5 7 9 5.5 7 6c-3 1-2.5 5 1 6 2 .7 4.5-.5 6-3z", "#1878c8"], ["M2 8c.5-4 3.5-6 6.5-6C12 2 14 4 14 6.5 14 9 11 9.5 9.5 8.8 10 6 5 3 2 8z", "#37c08e"], ["M2 8c1-3.5 4.5-4 6-2.5-3 0-4.5 3-2.5 5.5C3 11.5 1.7 10 2 8z", "#2aa7e0"]]],
  ["File Explorer", [["M2 3h5l1.2 1.5H14V13H2z", "#f0b429"], ["M2 6h12v7H2z", "#fcd667"], ["M4.5 14V9.5h7V14h-2v-2.5h-3V14z", "#3b8fd0"]], "run"],
  ["Chrome", [["M8 8L2.4 4.8A6.4 6.4 0 0 1 13.6 4.8z", "#e34133"], ["M8 8L2.4 4.8A6.4 6.4 0 0 0 8 14.4L11 9z", "#2da94f"], ["M8 8L13.6 4.8A6.4 6.4 0 0 1 8 14.4z", "#fcc31e"], ["M5 8a3 3 0 1 0 6 0a3 3 0 1 0-6 0z", "#3f7fe8", "#fff", 1], ["M9.5 12a2.8 2.8 0 1 0 5.6 0a2.8 2.8 0 1 0-5.6 0z", "#6a4a3c", "#eadfd8", 0.6]], "run"],
  ["Dropbox", [["M5 2L8 4 5 6 2 4zM11 2l3 2-3 2-3-2zM5 6l3 2-3 2-3-2zM11 6l3 2-3 2-3-2zM5 11l3-2 3 2-3 2.3z", "#111"]]],
  ["Amazon", [["M1 1.500h14V14H1z", "#f7f7f7"], ["M5.8 4c1-1.500 4.200-1.300 4.200.8v4.500M10 6.300c-5-.5-5.500 3.200-2.700 3.200 1.500 0 2.700-1 2.700-2.500", "", "#333", 1.1], ["M2.5 12h2v1.5h-2z", "#e34133"], ["M5.5 12h2v1.5h-2z", "#2da94f"], ["M8.5 12h2v1.5h-2z", "#fcc31e"], ["M11.5 12h2v1.5h-2z", "#3f7fe8"]]],
  ["LINE", [["M3.5 1.5h9a2 2 0 0 1 2 2v9a2 2 0 0 1-2 2h-9a2 2 0 0 1-2-2v-9a2 2 0 0 1 2-2z", "#09b83e"], ["M8 4c-3 0-5 1.7-5 3.7s1.6 3.2 4.3 3.6c.8.2.5.7.4 1.5 2-.8 5.3-3 5.3-5.1S11 4 8 4z", "#fff"], ["M5 6.5v2h1M7 6.5v2M8.2 8.5v-2l1.2 2v-2M11.5 6.5h-1v2h1", "", "#09b83e", 0.6]], "run"],
  ["Paint", [["M2 9c0-4 5-6 9-4 2 1 1 3 0 4-1 .8 0 2-1 3.5-2 2.5-8 1-8-3.500z", "#cfe0ee", "#9ab4c8", 0.5], ["M4 7.5h1.5V9H4z", "#e34133"], ["M6.5 5.8H8v1.5H6.5z", "#fcc31e"], ["M4.5 10.5H6V12H4.5z", "#2da94f"], ["M7.5 11H9v1.5H7.5z", "#3f7fe8"], ["M14.5 1.5L9 9", "", "#b06a30", 1.4]], "run"],
  ["Power BI", [["M9.5 1.5h4v13h-4z", "#e8ad0c"], ["M6.5 5h4.500v9.500H6.500z", "#f5cb2e"], ["M3.500 8.500h4.500v6H3.500z", "#fbe17a"]], "active"],
];

function BreadPicture() {
  return (
    <svg width="38" height="20" viewBox="0 0 38 20" aria-hidden="true">
      <path d="M4 11C4 4 11 .5 19 .5S35 4 35 11z" fill="#e39a48" />
      <path d="M10 5c3-4 15-4 20 0-6 2-14 2-20 0z" fill="#f8cf8c" />
      <path d="M1 13c0-2 5-3 10-2h16c5-1 10 0 10 2 0 4-8 7-18 7S1 17 1 13z" fill="#a8502a" />
      <path d="M1 12c4-3 8-1 10 0l-1 3c-4 1-8-1-9-3zM37 11c-4-3-9-1-11 1l3 3c4 1 7-2 8-4z" fill="#e8863c" />
      <path d="M11 17C8 14 11 10 9.500 7.500 9 7 7.500 8 6.500 8c.5-3 4.500-4.500 6-2 1.500 3-.5 5 2 6.500 5-3 12-2 18 1.500-2 4-6 5-11 5-4 0-8 0-10.500-2z" fill="#fdf6ec" />
      <path d="M17 15c4-2 8-2 12-1" stroke="#ddcdb8" fill="none" strokeWidth=".6" />
    </svg>
  );
}

export default function App() {
  return (
    <Shell>
      <Global />
      <TitleBar>
        <TitleSide>
          <Icon w={9} marks={[["M.8 .8h6l1.5 1.5v6H.8zM2.5 1v2h3.5V1M2.5 8V5.5h4V8", "", "#f3f2f1", 0.9]]} />
          <Icon w={8} marks={[["M1 1v2.5h2.5M1.2 3.3c2-3 6-2 5.5 1C6.5 5.5 5 7 4 7.5", "", "#7d7b79"]]} />
          <Icon w={8} marks={[["M7 1v2.5H4.5M6.8 3.3c-2-3-6-2-5.5 1C1.500 5.500 3 7 4 7.500", "", "#7d7b79"]]} />
          <h1>Dashboard Social Media • Last saved: 10/6/2025 at 7:04 PM</h1>
          <Icon w={5} h={8} marks={[["M.5 2h4L2.5 4.5z", "#fff"]]} />
        </TitleSide>
        <TitleSearch>
          <Icon w={8} marks={magnifier("#484644")} />
          <Field placeholder="Search" aria-label="Search" />
        </TitleSearch>
        <TitleSide $end>
          <Account>
            Sign in
            <Icon w={10} marks={[["M.2 5a4.8 4.8 0 1 0 9.6 0a4.8 4.8 0 1 0-9.6 0z", "#fff"], ["M3.5 3.5a1.5 1.5 0 1 0 3 0a1.5 1.5 0 1 0-3 0M2.3 7.5V5.5h5.4v2z", "", dk]]} />
          </Account>
          <IconButton aria-label="Minimize"><Icon w={8} marks={[["M1.5 4h5", "", "#fff"]]} /></IconButton>
          <IconButton aria-label="Maximize"><Icon w={8} marks={[["M1.8 1.8h4.6v4.6H1.8z", "", "#fff"]]} /></IconButton>
          <IconButton aria-label="Close"><Icon w={8} marks={[["M1.5 1.5l5 5M6.5 1.5l-5 5", "", "#fff"]]} /></IconButton>
        </TitleSide>
      </TitleBar>
      <MenuBar>
        {["File", "Home", "Insert", "Modeling", "View", "Optimize", "Help"].map((m) => (
          <MenuTab key={m} $active={m === "Home"}>{m}</MenuTab>
        ))}
        <ShareButton>
          <Icon w={8} marks={[["M3 1.5H1v5.8h5.5V5.5M3 5c0-2 1-2.8 3-2.8V.8L7.6 2.8 6 4.7V3.4", "", "#fff", 0.7]]} />
          Share
          <Icon w={5} h={4} box="0 0 7 5" marks={chevron("#fff")} />
        </ShareButton>
      </MenuBar>
      <Ribbon />
      <Body>
        <Rail>
          {railIcons.map(([name, marks], i) => (
            <RailButton key={name} aria-label={name} $active={i === 0}><Icon w={10} marks={marks} /></RailButton>
          ))}
        </Rail>
        <Center>
          <Work>
            <Canvas>
              <Page>
                <Kpis>
                  {[["158M", "Total Views"], ["63M", "Total Reach"], ["621K", "Total Engage"], ["58K", "Total Followers"], ["0.39%", "%Overall Engage"]].map(([v, n]) => (
                    <Kpi key={n}><KpiName>{n}</KpiName><KpiValue>{v}</KpiValue></Kpi>
                  ))}
                </Kpis>
                <div>
                  <TopRow>
                    <Visual $indent={0}><h2>Total Views by MonthName</h2><PieChart /></Visual>
                    <Visual $indent={4}><h2>Total Views by Type</h2><BarChart /></Visual>
                    <Slicers>
                      {["MonthName", "Year"].map((name) => (
                        <Slicer key={name}>
                          <SlicerHead>{name}<Icon w={7} h={5} marks={chevron("#d0d0d0")} /></SlicerHead>
                          <SlicerBox>
                            <SlicerSelect><option>All</option></SlicerSelect>
                            <Icon w={7} h={5} marks={chevron("#e0e0e0")} />
                          </SlicerBox>
                        </Slicer>
                      ))}
                    </Slicers>
                  </TopRow>
                  <TrendGrid>
                    {trends.map((t, i) => <TrendVisual key={t.title} t={t} col={(i % 2) + 1} />)}
                  </TrendGrid>
                </div>
              </Page>
            </Canvas>
            <Filters>
              <PanelHead $pad="0 4px 0 5px">
                <Icon w={10} marks={[["M1 1h8v1.5L6 5.5V9L4 8V5.5L1 2.5z", "", "#fff", 1]]} />
                <h2>Filters</h2>
                <IconButton aria-label="Hide filters"><Icon w={8} marks={[["M.8 4.5c1-3 5.4-3 6.4 0", "", "#e0e0e0", 1], ["M2.5 4.5a1.5 1.5 0 1 0 3 0a1.5 1.5 0 1 0-3 0", "#e0e0e0"]]} /></IconButton>
                <IconButton aria-label="Collapse filters"><Icon w={12} h={7} box="-4 0 12 7" marks={doubleChevron("#fff")} /></IconButton>
              </PanelHead>
              <FilterSearch>
                <label><Icon w={8} marks={magnifier("#e0e0e0")} /><Field placeholder="Search" aria-label="Search filters" /></label>
              </FilterSearch>
              {["Filters on this page", "Filters on all pages"].map((t) => (
                <FilterSection key={t}>
                  <FilterTitle>{t}<Icon w={8} h={9} marks={[["M1 5h1v1H1zM3.5 5h1v1h-1zM6 5h1v1H6z", "#d0d0d0"]]} /></FilterTitle>
                  <FilterDrop>Add data fields here</FilterDrop>
                </FilterSection>
              ))}
            </Filters>
          </Work>
          <PageTabs>
            <ViewButton $active aria-label="Desktop layout"><Icon w={11} h={9} marks={[["M1 1h9v5.5H1zM5.5 6.5v1.7M3 8.3h5", "", grey]]} /></ViewButton>
            <ViewButton aria-label="Mobile layout"><Icon w={7} h={11} marks={[["M.8 .8h5.4v9.4H.8zM2.5 8.7h2", "", grey]]} /></ViewButton>
            <ArrowPair><PageArrow aria-label="Previous page">‹</PageArrow><PageArrow aria-label="Next page">›</PageArrow></ArrowPair>
            <PageTab>Dashboard</PageTab>
            <AddPage aria-label="New page"><Icon w={6} marks={[["M3 .3v5.4M.3 3h5.4", "", "#fff", 1.3]]} /></AddPage>
          </PageTabs>
        </Center>
        <Pane $w={91}>
          <PanelHead $pad="0 5px 0 3px">
            <h2>Visualizations</h2>
            <IconButton aria-label="Collapse visualizations"><Icon w={7} marks={doubleChevron(dk)} /></IconButton>
          </PanelHead>
          <BuildLabel>Build visual</BuildLabel>
          <BuildTabs>
            <BuildTab $active aria-label="Build visual"><Icon w={14} h={13} marks={[["M1 1h9", "", dk], ["M1 2.5h12v3.5H1zM1 8h12v4H1z", teal, "#0b5c4c", 0.5]]} /></BuildTab>
            <BuildTab aria-label="Format visual"><Icon w={14} h={14} marks={[["M9 5V4L5.5 1H1.5v12H6M5.5 1v3H9", "", dk], ["M13 4.5L8 10l-1.5 2.5L9 11.5 13.5 6M4.5 13c1 .5 2-.5 1.5-1.5", "#fff", dk]]} /></BuildTab>
          </BuildTabs>
          <Gallery>
            {viz.map(([name, marks]) => (
              <GalleryButton key={name} aria-label={name}>
                {marks.length ? <Icon w={10} marks={marks} /> : <ScriptGlyph>{name[0] === "R" ? "R" : "Py"}</ScriptGlyph>}
              </GalleryButton>
            ))}
          </Gallery>
          <More aria-label="More visuals"><Icon w={10} h={8} marks={[["M1 5h1v1H1zM4 5h1v1H4zM7 5h1v1H7z", dk]]} /></More>
          <Wells>
            <WellTitle>Values</WellTitle>
            <Well>Add data fields here</Well>
            <WellTitle>Drill through</WellTitle>
            <Switch label="Cross-report" initial={false} />
            <Switch label="Keep all filters" initial />
            <Well>Add drill-through fields here</Well>
          </Wells>
        </Pane>
        <Pane $w={90}>
          <PanelHead $pad="0 4px 0 3px">
            <h2>Data</h2>
            <IconButton aria-label="Collapse data"><Icon w={7} marks={doubleChevron(dk)} /></IconButton>
          </PanelHead>
          <DataSearch><Icon w={8} marks={glass} /><Field placeholder="Search" aria-label="Search data" /></DataSearch>
          {["Table9", "tDate"].map((t) => (
            <TableItem key={t}>
              <Icon w={4} h={7} marks={[["M.8 1L3.2 3.5.8 6", "", grey, 0.7]]} />
              <Icon w={7} marks={[["M1.5 .8h4l1 1v3.5l-1 1h-4l-.9-1V1.8zM.6 2.5h6M.6 4.6h6M3.5 .8v5.5", "", dk, 0.7], ...(t === "tDate" ? [["M3.5 3.5h3.5V7H3.5z", dk] as Mark] : [])]} />
              {t}
            </TableItem>
          ))}
        </Pane>
      </Body>
      <Status>
        <span>Page 1 of 1</span>
        <StatusEnd>
          -<ZoomRange type="range" min={0} max={100} defaultValue={51} aria-label="Zoom" />+
          <span>103%</span>
          <Icon w={9} h={7} marks={[["M.8 .8h7.4v5.4H.8zM3 .8L.8 2.5M6 .8l2.2 1.7M3 6.2L.8 4.5M6 6.2l2.2-1.7", "", grey, 0.7]]} />
          <span>Update available (click to download)</span>
        </StatusEnd>
      </Status>
      <Taskbar>
        <Start aria-label="Start"><Icon w={9} marks={[["M.5 1.5L4 1v3.3H.5zM4.6 .9L8.5 .3v4H4.6zM.5 4.9H4v3.3l-3.5-.5zM4.6 4.9h3.9v4l-3.9-.6z", "#111"]]} /></Start>
        <TaskSearch>
          <Icon w={8} marks={magnifier("#252423")} />
          <Field placeholder="Type here to search" aria-label="Type here to search" />
          <BreadPicture />
        </TaskSearch>
        <TaskApps>
          {bigIcons.map(([name, marks, state]) => (
            <TaskApp key={name} aria-label={name} $state={state}><Icon w={14} box="0 0 16 16" marks={marks} /></TaskApp>
          ))}
        </TaskApps>
        <Tray>
          <Weather>
            <Icon w={12} marks={[["M1 6.5a4.8 4.8 0 1 0 9.6 0a4.8 4.8 0 1 0-9.6 0z", "#f59a1c"], ["M2 4.5a4.5 4.5 0 0 0 3 6.5c-3 .5-5-3-3-6.5z", "#fbc63c"], ["M6 3.2a2.8 2.8 0 1 0 5.6 0a2.8 2.8 0 1 0-5.6 0z", "#c4262e"], ["M9.2 4.8V1.8L7.7 3.8h2.3", "", "#fff", 0.6]]} />
            30°C <WeatherText>มีแดด</WeatherText>
          </Weather>
          <IconButton aria-label="Hidden icons"><Icon w={7} h={5} marks={[["M.7 4l2.8-3 2.8 3", "", "#252423"]]} /></IconButton>
          <Icon w={7} marks={[["M6.5 6.5H3.5l3-3zM.8 6c.5-3 2.5-5 5.5-5.3M2.5 6.3c.5-2 1.8-3.5 4-4", "", dk, 0.8]]} />
          <Icon w={8} marks={[["M.8 3h1.5L4 1.2v5.6L2.3 5.2H.8zM5.2 2.8c.7.8.7 1.8 0 2.6M6.3 1.7c1.3 1.4 1.3 3.4 0 4.8", "", dk, 0.7]]} />
          <span>ไทย</span>
          <Clock><span>12:05</span><span>30/12/2568</span></Clock>
          <IconButton aria-label="Notifications"><Icon w={13} marks={[["M1 1.5h8.5v6.5H6L4 9.7V8H1z", "#111"], ["M5.5 8.5a3.5 3.5 0 1 0 7 0a3.5 3.5 0 1 0-7 0z", "#e4e6e0", "#8a8886", 0.6], ["M8.4 7.5l.9-.7v3.6", "", "#222", 0.8]]} /></IconButton>
        </Tray>
      </Taskbar>
    </Shell>
  );
}
